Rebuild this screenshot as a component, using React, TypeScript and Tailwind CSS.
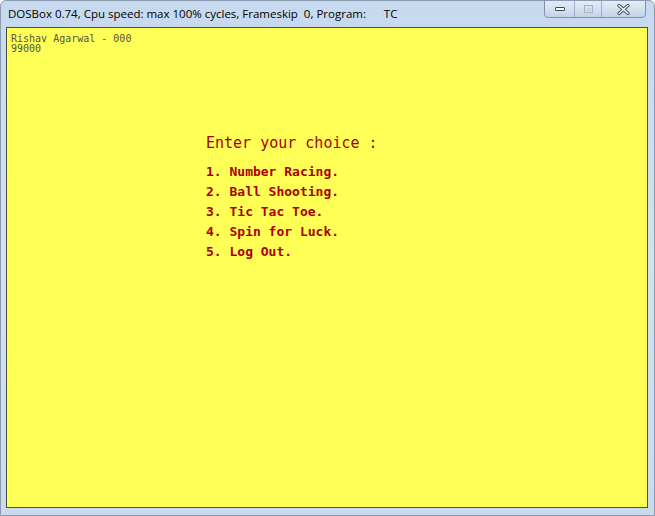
export default function App() {
  const items = [
    "1. Number Racing.",
    "2. Ball Shooting.",
    "3. Tic Tac Toe.",
    "4. Spin for Luck.",
    "5. Log Out.",
  ];

  return (
    <div className="w-[655px] h-[516px] flex flex-col bg-gradient-to-b from-[#c6d9ee] via-[#d3e2f2] to-[#c9dbef] overflow-hidden rounded-t-[6px] border border-[#8a9bb0]">
      {/* Title bar */}
      <div className="h-[26px] flex items-start justify-between pl-[7px] pr-[8px]">
        <div className="pt-[6px] text-[11.5px] leading-[14px] text-black whitespace-pre" style={{ fontFamily: '"Open Sans", "Noto Sans", sans-serif' }}>
          {"DOSBox 0.74, Cpu speed: max 100% cycles, Frameskip  0, Program:      TC"}
        </div>
        <div className="flex h-[18px] mt-[-1px] border border-[#8193ab] rounded-b-[4px] bg-gradient-to-b from-[#e4edf7] to-[#c2d4ea] overflow-hidden">
          <div className="w-[30px] flex items-center justify-center border-r border-[#9eb0c6]">
            <div className="w-[10px] h-[4px] bg-white border border-[#3e4a5a] rounded-[1px]" />
          </div>
          <div className="w-[27px] flex items-center justify-center border-r border-[#9eb0c6]">
            <div className="w-[9px] h-[8px] border border-[#a3b1c2] flex items-center justify-center">
              <div className="w-[5px] h-[3px] bg-[#c9d4e0]" />
            </div>
          </div>
          <div className="w-[43px] flex items-center justify-center">
            <svg width="13" height="11" viewBox="0 0 13 11">
              <path d="M2 1.5 L11 9.5 M11 1.5 L2 9.5" stroke="#3e4a5a" strokeWidth="3.2" strokeLinecap="round" />
              <path d="M2 1.5 L11 9.5 M11 1.5 L2 9.5" stroke="#ffffff" strokeWidth="1.4" strokeLinecap="round" />
            </svg>
          </div>
        </div>
      </div>

      {/* Client area */}
      <div className="flex-1 pl-[5px] pr-[6px] pb-[7px] flex">
        <div className="flex-1 border border-[#4d4d40] bg-[#ffff55] flex flex-col" style={{ fontFamily: '"DejaVu Sans Mono", "Liberation Mono", monospace' }}>
          <div className="pl-[4px] pt-[6px] text-[10px] leading-[10px] text-[#555540]">
            <div>Rishav Agarwal - 000</div>
            <div>99000</div>
          </div>

          <div className="pl-[199px] pt-[80px] text-[#aa0000]">
            <div className="text-[15px] leading-[18px] mb-[10px]">Enter your choice :</div>
            <div className="flex flex-col">
              {items.map((t) => (
                <div key={t} className="text-[13px] leading-[20px] font-bold whitespace-pre">
                  {t}
                </div>
              ))}
            </div>
          </div>
        </div>
      </div>
    </div>
  );
}
